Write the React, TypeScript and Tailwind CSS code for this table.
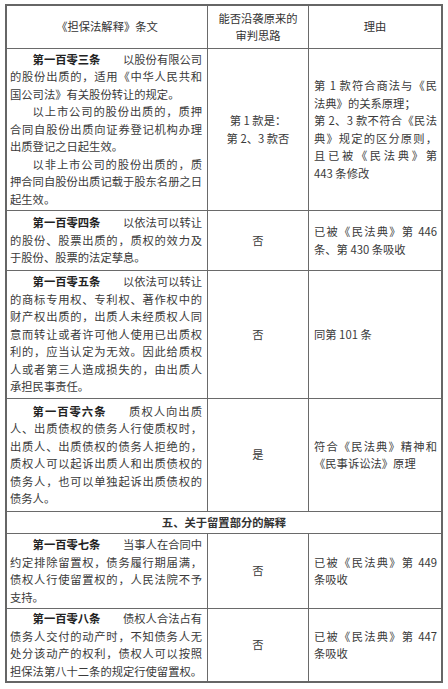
import React from "react";

const J = "whitespace-nowrap text-justify [text-align-last:justify]";
const L = "whitespace-nowrap";
const IND = "pl-[22.6px]";

function Title({ t, rest }: { t: string; rest: string }) {
  return (
    <div className={`${J} ${IND}`}>
      <span className="font-bold text-[#222]">{t}</span>
      <span className="ml-[22.6px]">{rest}</span>
    </div>
  );
}

function Row({
  h,
  c1,
  c2,
  c3,
}: {
  h: string;
  c1: React.ReactNode;
  c2: React.ReactNode;
  c3: React.ReactNode;
}) {
  return (
    <div className={`flex border-t border-[#6a6a6a] ${h}`}>
      <div className="w-[200px] shrink-0 flex flex-col justify-center pl-[3px] pr-[5px]">{c1}</div>
      <div className="w-[101px] shrink-0 border-l border-[#6a6a6a] flex flex-col justify-center items-center">
        {c2}
      </div>
      <div className="flex-1 border-l border-[#6a6a6a] flex flex-col justify-center pl-[5px] pr-[4px]">{c3}</div>
    </div>
  );
}

export default function App() {
  return (
    <div className="w-[448px] h-[689px] bg-white pt-[4px] pl-[5px] [font-family:'Noto_Sans_CJK_SC',sans-serif] text-[11.3px] leading-[17.5px] text-[#3a3a3a]">
      <div className="w-[438px] border-2 border-[#666] flex flex-col">
        {/* header */}
        <div className="flex h-[42px]">
          <div className="w-[200px] shrink-0 flex items-center justify-center text-[#333]">《担保法解释》条文</div>
          <div className="w-[101px] shrink-0 border-l border-[#6a6a6a] flex flex-col justify-center items-center text-[#333]">
            <div>能否沿袭原来的</div>
            <div>审判思路</div>
          </div>
          <div className="flex-1 border-l border-[#6a6a6a] flex items-center justify-center text-[#333]">理由</div>
        </div>

        <Row
          h="h-[162px]"
          c1={
            <>
              <Title t="第一百零三条" rest="以股份有限公司" />
              <div className={J}>的股份出质的，适用《中华人民共和</div>
              <div className={L}>国公司法》有关股份转让的规定。</div>
              <div className={`${J} ${IND}`}>以上市公司的股份出质的，质押</div>
              <div className={J}>合同自股份出质向证券登记机构办理</div>
              <div className={L}>出质登记之日起生效。</div>
              <div className={`${J} ${IND}`}>以非上市公司的股份出质的，质</div>
              <div className={J}>押合同自股份出质记载于股东名册之日</div>
              <div className={L}>起生效。</div>
            </>
          }
          c2={
            <>
              <div>第 1 款是：</div>
              <div>第 2、3 款否</div>
            </>
          }
          c3={
            <>
              <div className={J}>第 1 款符合商法与《民</div>
              <div className={L}>法典》的关系原理；</div>
              <div className={J}>第 2、3 款不符合《民法</div>
              <div className={J}>典》规定的区分原则，</div>
              <div className={J}>且已被《民法典》第</div>
              <div className={L}>443 条修改</div>
            </>
          }
        />

        <Row
          h="h-[60px]"
          c1={
            <>
              <Title t="第一百零四条" rest="以依法可以转让" />
              <div className={J}>的股份、股票出质的，质权的效力及</div>
              <div className={L}>于股份、股票的法定孳息。</div>
            </>
          }
          c2={<div>否</div>}
          c3={
            <>
              <div className={J}>已被《民法典》第 446</div>
              <div className={L}>条、第 430 条吸收</div>
            </>
          }
        />

        <Row
          h="h-[128px]"
          c1={
            <>
              <Title t="第一百零五条" rest="以依法可以转让" />
              <div className={J}>的商标专用权、专利权、著作权中的</div>
              <div className={J}>财产权出质的，出质人未经质权人同</div>
              <div className={J}>意而转让或者许可他人使用已出质权</div>
              <div className={J}>利的，应当认定为无效。因此给质权</div>
              <div className={J}>人或者第三人造成损失的，由出质人</div>
              <div className={L}>承担民事责任。</div>
            </>
          }
          c2={<div>否</div>}
          c3={<div className={L}>同第 101 条</div>}
        />

        <Row
          h="h-[113px]"
          c1={
            <>
              <Title t="第一百零六条" rest="质权人向出质" />
              <div className={J}>人、出质债权的债务人行使质权时，</div>
              <div className={J}>出质人、出质债权的债务人拒绝的，</div>
              <div className={J}>质权人可以起诉出质人和出质债权的</div>
              <div className={J}>债务人，也可以单独起诉出质债权的</div>
              <div className={L}>债务人。</div>
            </>
          }
          c2={<div>是</div>}
          c3={
            <>
              <div className={J}>符合《民法典》精神和</div>
              <div className={L}>《民事诉讼法》原理</div>
            </>
          }
        />

        <div className="flex h-[22px] border-t border-[#6a6a6a] items-center justify-center font-bold text-[#333]">
          五、关于留置部分的解释
        </div>

        <Row
          h="h-[75px]"
          c1={
            <>
              <Title t="第一百零七条" rest="当事人在合同中" />
              <div className={J}>约定排除留置权，债务履行期届满，</div>
              <div className={J}>债权人行使留置权的，人民法院不予</div>
              <div className={L}>支持。</div>
            </>
          }
          c2={<div>否</div>}
          c3={
            <>
              <div className={J}>已被《民法典》第 449</div>
              <div className={L}>条吸收</div>
            </>
          }
        />

        <Row
          h="h-[73px]"
          c1={
            <>
              <Title t="第一百零八条" rest="债权人合法占有" />
              <div className={J}>债务人交付的动产时，不知债务人无</div>
              <div className={J}>处分该动产的权利，债权人可以按照</div>
              <div className={J}>担保法第八十二条的规定行使留置权。</div>
            </>
          }
          c2={<div>否</div>}
          c3={
            <>
              <div className={J}>已被《民法典》第 447</div>
              <div className={L}>条吸收</div>
            </>
          }
        />
      </div>
    </div>
  );
}
